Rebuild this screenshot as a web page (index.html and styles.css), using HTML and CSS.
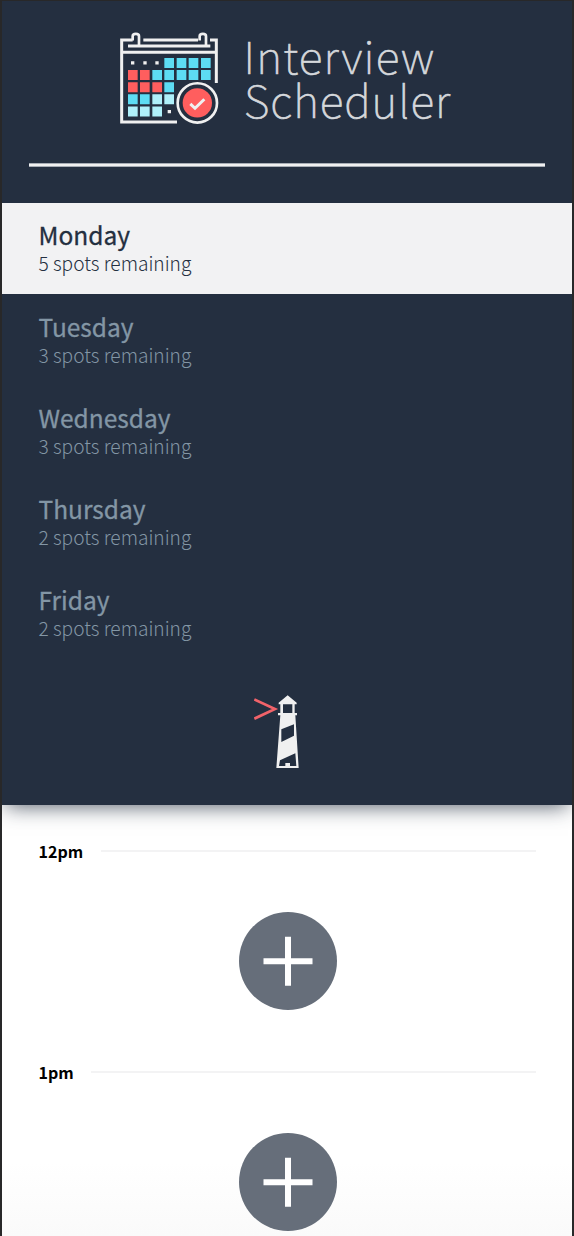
FILE: index.html
```
<!DOCTYPE html>
<html lang="en">
<head>
<meta charset="utf-8">
<title>Interview Scheduler</title>
<link rel="stylesheet" href="styles.css">
</head>
<body>
<main class="layout">
  <section class="sidebar">
    <svg class="logo" viewBox="0 0 350 112" role="img" aria-label="Interview Scheduler">
      <g transform="translate(-10 4.900) scale(.33333)">
        <g fill="none" stroke="#f0f0f0" stroke-width="9">
          <path d="M68 45H35V291H201M100 45H264M300 45H319V174M35 82H319"/>
          <path d="M54 63H301"/>
          <path d="M68 47V34Q68 27 77.500 27Q87 27 87 34V62M269 47V34Q269 27 278.500 27Q288 27 288 34V62" stroke-width="8"/>
        </g>
        <g fill="#f0f0f0"><path d="M63 109h10v10H63zM100 109h10v10h-10zM136 109h10v10h-10zM173 255h10v10h-10z"/></g>
        <path fill="#5ddcf3" d="M163 99h29v30h-29zM200 99h29v30h-29zM236 99h29v30h-29zM273 99h29v30h-29zM127 135h29v30h-29zM163 135h29v30h-29zM200 135h29v30h-29zM236 135h29v30h-29zM273 135h29v30h-29zM163 172h29v30h-29zM54 208h29v30H54zM90 208h29v30H90z"/>
        <path fill="#ff5e5e" d="M54 135h29v30H54zM90 135h29v30H90zM54 172h29v30H54zM90 172h29v30H90zM127 172h29v30h-29z"/>
        <path fill="#aff0fa" d="M127 208h29v30h-29zM163 208h29v30h-29zM54 245h29v30H54zM90 245h29v30H90zM127 245h29v30h-29z"/>
        <circle cx="262" cy="234" r="59" fill="#242f40" stroke="#f0f0f0" stroke-width="8"/>
        <circle cx="262" cy="234" r="44" fill="#ff5e5e"/>
        <path d="M241 237L255 250L283 223" fill="none" stroke="#f0f0f0" stroke-width="9"/>
      </g>
      <text class="logo-text" x="123.500" y="53.500" textLength="190.500">Interview</text>
      <text class="logo-text" x="124" y="97.500" textLength="206">Scheduler</text>
    </svg>
    <hr class="separator">
    <ul class="days">
      <li class="day selected"><h2>Monday</h2><p>5 spots remaining</p></li>
      <li class="day"><h2>Tuesday</h2><p>3 spots remaining</p></li>
      <li class="day"><h2>Wednesday</h2><p>3 spots remaining</p></li>
      <li class="day"><h2>Thursday</h2><p>2 spots remaining</p></li>
      <li class="day"><h2>Friday</h2><p>2 spots remaining</p></li>
    </ul>
    <svg class="lighthouse" viewBox="40 30 140 222" role="img" aria-label="Lighthouse Labs">
      <path d="M41 43L103 72L41 101" fill="none" stroke="#f2636a" stroke-width="8"/>
      <g fill="#f0f0f0">
        <path fill-rule="evenodd" d="M141 31L168 53V58H162V84H169V91H164L174 249H107L119 91H112V84H119V58H114V53zM127 58V84H155V58zM122 133V171L160 152V118zM118 226L115 243H167L164 205z"/>
        <path d="M134 246V234H148V246z"/>
      </g>
    </svg>
  </section>
  <section class="schedule">
    <article class="slot">
      <header class="time"><h4>12pm</h4><hr></header>
      <svg class="add" viewBox="0 0 98 98" role="img" aria-label="Add"><circle cx="49" cy="49" r="49"/><path d="M24.500 49.300H73.500M49 24.800V73.800"/></svg>
    </article>
    <article class="slot">
      <header class="time"><h4>1pm</h4><hr></header>
      <svg class="add" viewBox="0 0 98 98" role="img" aria-label="Add"><circle cx="49" cy="49" r="49"/><path d="M24.500 49.300H73.500M49 24.800V73.800"/></svg>
    </article>
  </section>
</main>
</body>
</html>
```
FILE: styles.css
```
* { box-sizing: border-box; margin: 0; padding: 0; }
body { background: #fff; font-family: "Noto Sans CJK SC", "Noto Sans CJK JP", sans-serif; }
.layout { height: 1236px; overflow: hidden; border: 2px solid #282829; border-top-width: 1px; border-bottom: 0; background: linear-gradient(#fff 94%, #fafafa); }
.sidebar { display: flex; flex-direction: column; height: 803.500px; background: #242f40; box-shadow: 0 5px 20px -4px rgba(36, 47, 64, .8); }
.logo { width: 350px; height: 112px; margin: 19.400px 0 0 118px; }
.logo-text { font-size: 44.500px; font-weight: 100; fill: #d5d8dc; stroke: #d5d8dc; stroke-width: .7px; }
.separator { height: 4px; margin: 30.200px 27px 36.700px; border: solid #a7adb5; border-width: 1px 0; background: #f0f0f0; }
.days { list-style: none; }
.day { height: 91.200px; padding: 15.200px 0 0 36.500px; color: #8396a5; }
.selected { background: #f2f2f3; color: #242f40; }
.day h2 { font-size: 24.500px; line-height: 33px; font-weight: 400; -webkit-text-stroke: .3px; }
.day p { font-size: 19.150px; line-height: 25px; font-weight: 300; }
.lighthouse { width: 46.670px; height: 74px; margin: 35.500px 0 0 251.500px; }
.schedule { padding: 34.500px 36px 0; }
.slot { display: flex; flex-direction: column; align-items: center; height: 220.600px; }
.time { display: flex; align-items: center; gap: 17.500px; align-self: stretch; height: 24px; padding-left: .5px; }
.time h4 { font-size: 16px; line-height: 24px; font-weight: 700; }
.time hr { flex: 1; height: 2px; border: 0; background: #f3f3f4; }
.add { width: 98px; height: 98px; margin: 49px 0 0 1px; flex: none; }
.add circle { fill: #666e7a; }
.add path { stroke: #fff; stroke-width: 6; }
```
